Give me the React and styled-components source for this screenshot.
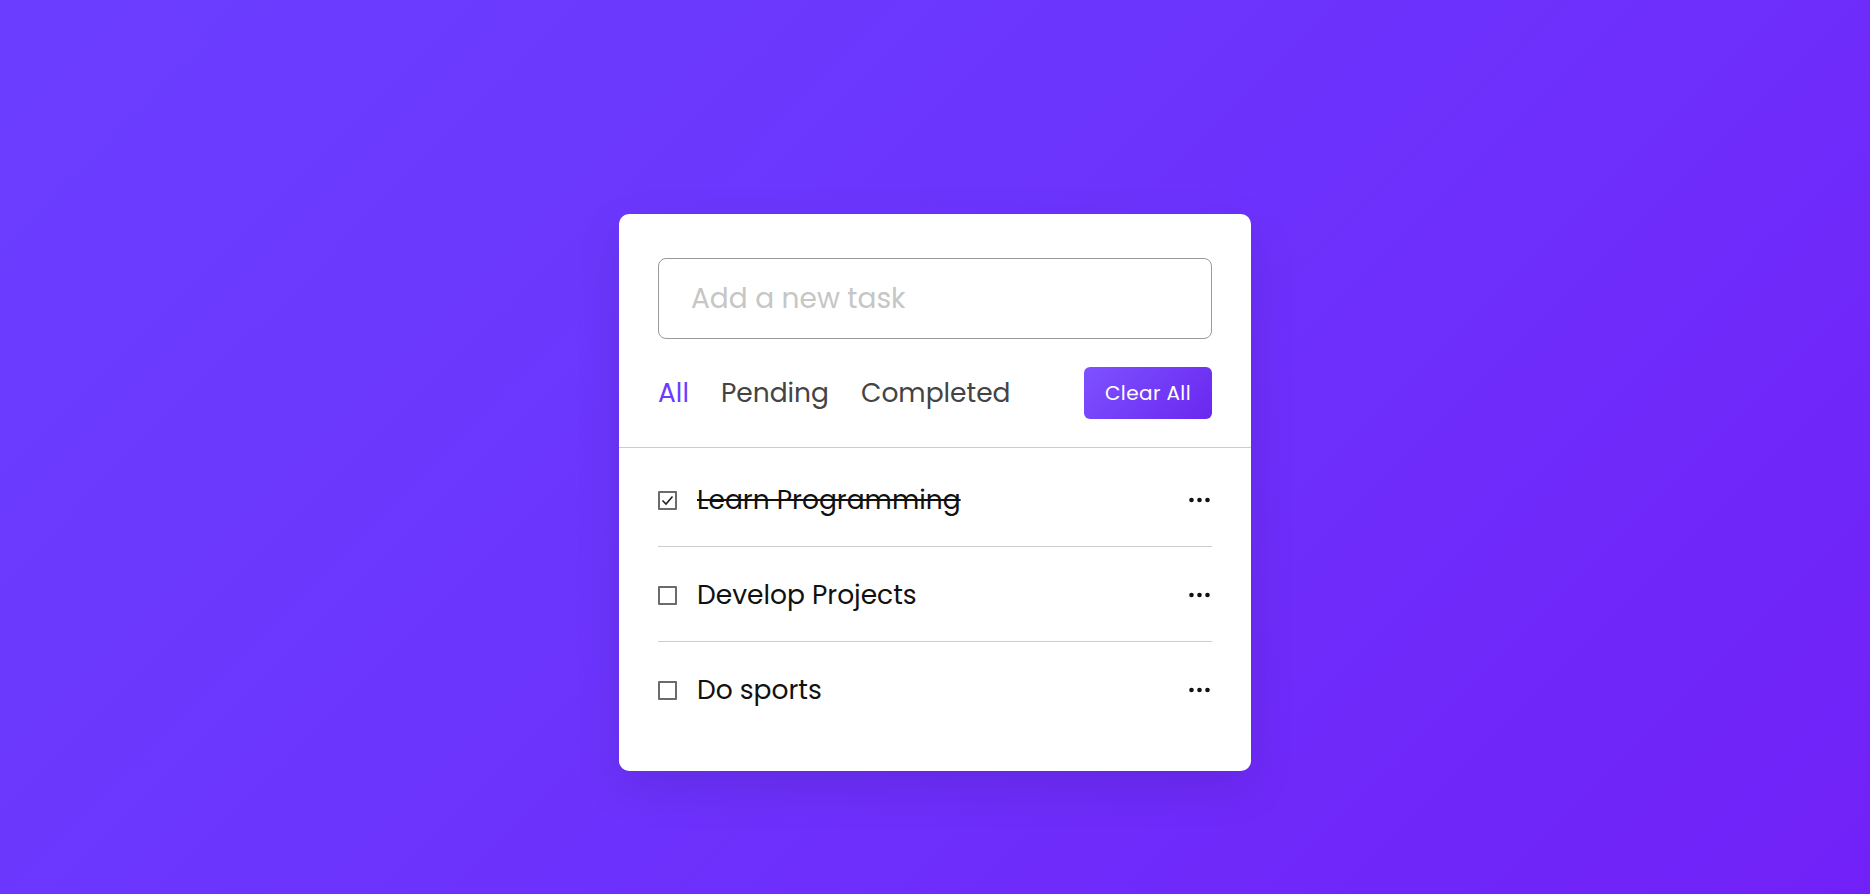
import React, { useState } from "react";
import styled, { createGlobalStyle } from "styled-components";

const GlobalStyle = createGlobalStyle`
  * {
    margin: 0;
    padding: 0;
    box-sizing: border-box;
  }
  body {
    font-family: "Poppins", "Open Sans", sans-serif;
    background: linear-gradient(135deg, #6a3eff 0%, #6c34fd 45%, #7121f7 100%);
    min-height: 100vh;
    overflow: hidden;
  }
`;

const Page = styled.main`
  min-height: 100vh;
  position: relative;
  padding-top: 214px;

  &::before {
    content: "";
    position: absolute;
    left: 0;
    top: 0;
    width: 205px;
    height: 248px;
    background: rgba(140, 60, 255, 0.06);
    clip-path: polygon(0 0, 160px 0, 205px 42px, 0 248px);
    pointer-events: none;
  }
`;

const Card = styled.section`
  position: relative;
  width: 632px;
  margin: 0 auto;
  padding: 44px 0 45px;
  background: #fff;
  border-radius: 10px;
  box-shadow: 0 16px 47px rgba(0, 0, 0, 0.1);
`;

const InputRow = styled.div`
  height: 81px;
  padding: 0 39px;
`;

const TaskInput = styled.input`
  width: 100%;
  height: 100%;
  outline: none;
  font-family: inherit;
  font-size: 28px;
  color: #333;
  border: 1px solid #999;
  border-radius: 8px;
  padding: 0 30px 0 32px;

  &::placeholder {
    color: #c6c6c6;
  }
`;

const Controls = styled.div`
  display: flex;
  align-items: center;
  justify-content: space-between;
  padding: 28px 39px 28px;
  border-bottom: 1px solid #ccc;
`;

const Filters = styled.div`
  display: flex;
  align-items: center;
  gap: 32px;
`;

const Filter = styled.span`
  font-size: 26.5px;
  color: ${(p) => (p.$active ? "#6a3cff" : "#444")};
  cursor: pointer;
`;

const ClearButton = styled.button`
  border: none;
  outline: none;
  color: #fff;
  font-family: inherit;
  font-size: 20px;
  width: 128px;
  height: 52px;
  border-radius: 6px;
  letter-spacing: 0.4px;
  cursor: pointer;
  background: linear-gradient(135deg, #7d52ff 0%, #6a27ef 100%);
`;

const TaskList = styled.ul`
  list-style: none;
  margin: 32px 8px 0 0;
  padding: 0 31px 16px 39px;
`;

const Task = styled.li`
  display: flex;
  align-items: center;
  justify-content: space-between;
  font-size: 26.5px;
  line-height: 40px;
  margin-bottom: 28px;
  padding-bottom: 26px;
  border-bottom: 1px solid #ccc;

  &:last-child {
    margin-bottom: 0;
    padding-bottom: 0;
    border-bottom: 0;
  }
`;

const TaskLabel = styled.label`
  display: flex;
  align-items: center;
  cursor: pointer;
`;

const Box = styled.span`
  width: 19px;
  height: 19px;
  border: 2px solid #6b6b6b;
  border-radius: 1px;
  display: flex;
  align-items: center;
  justify-content: center;
  flex-shrink: 0;
`;

const TaskName = styled.p`
  margin-left: 20px;
  color: #111;
  text-decoration: ${(p) => (p.$done ? "line-through" : "none")};
  text-decoration-thickness: 2px;
  user-select: none;
`;

const MenuButton = styled.span`
  display: flex;
  align-items: center;
  cursor: pointer;
  margin-right: 2px;
`;

function Ellipsis() {
  return (
    <svg width="21" height="6" viewBox="0 0 21 6">
      <circle cx="2.5" cy="3" r="2.3" fill="#111" />
      <circle cx="10.5" cy="3" r="2.3" fill="#111" />
      <circle cx="18.5" cy="3" r="2.3" fill="#111" />
    </svg>
  );
}

const initialTasks = [
  { name: "Learn Programming", done: true },
  { name: "Develop Projects", done: false },
  { name: "Do sports", done: false },
];

export default function App() {
  const [tasks, setTasks] = useState(initialTasks);
  const [filter, setFilter] = useState("all");

  const toggle = (i) =>
    setTasks(tasks.map((t, idx) => (idx === i ? { ...t, done: !t.done } : t)));

  return (
    <>
      <GlobalStyle />
      <Page>
        <Card>
          <InputRow>
            <TaskInput type="text" placeholder="Add a new task" />
          </InputRow>
          <Controls>
            <Filters>
              <Filter $active={filter === "all"} onClick={() => setFilter("all")}>
                All
              </Filter>
              <Filter $active={filter === "pending"} onClick={() => setFilter("pending")}>
                Pending
              </Filter>
              <Filter $active={filter === "completed"} onClick={() => setFilter("completed")}>
                Completed
              </Filter>
            </Filters>
            <ClearButton onClick={() => setTasks([])}>Clear All</ClearButton>
          </Controls>
          <TaskList>
            {tasks.map((task, i) => (
              <Task key={task.name}>
                <TaskLabel onClick={() => toggle(i)}>
                  <Box>
                    {task.done && (
                      <svg width="13" height="11" viewBox="0 0 13 11">
                        <path d="M1.5 5.5 L5 9 L11.5 1.5" stroke="#222" strokeWidth="1.6" fill="none" />
                      </svg>
                    )}
                  </Box>
                  <TaskName $done={task.done}>{task.name}</TaskName>
                </TaskLabel>
                <MenuButton>
                  <Ellipsis />
                </MenuButton>
              </Task>
            ))}
          </TaskList>
        </Card>
      </Page>
    </>
  );
}
